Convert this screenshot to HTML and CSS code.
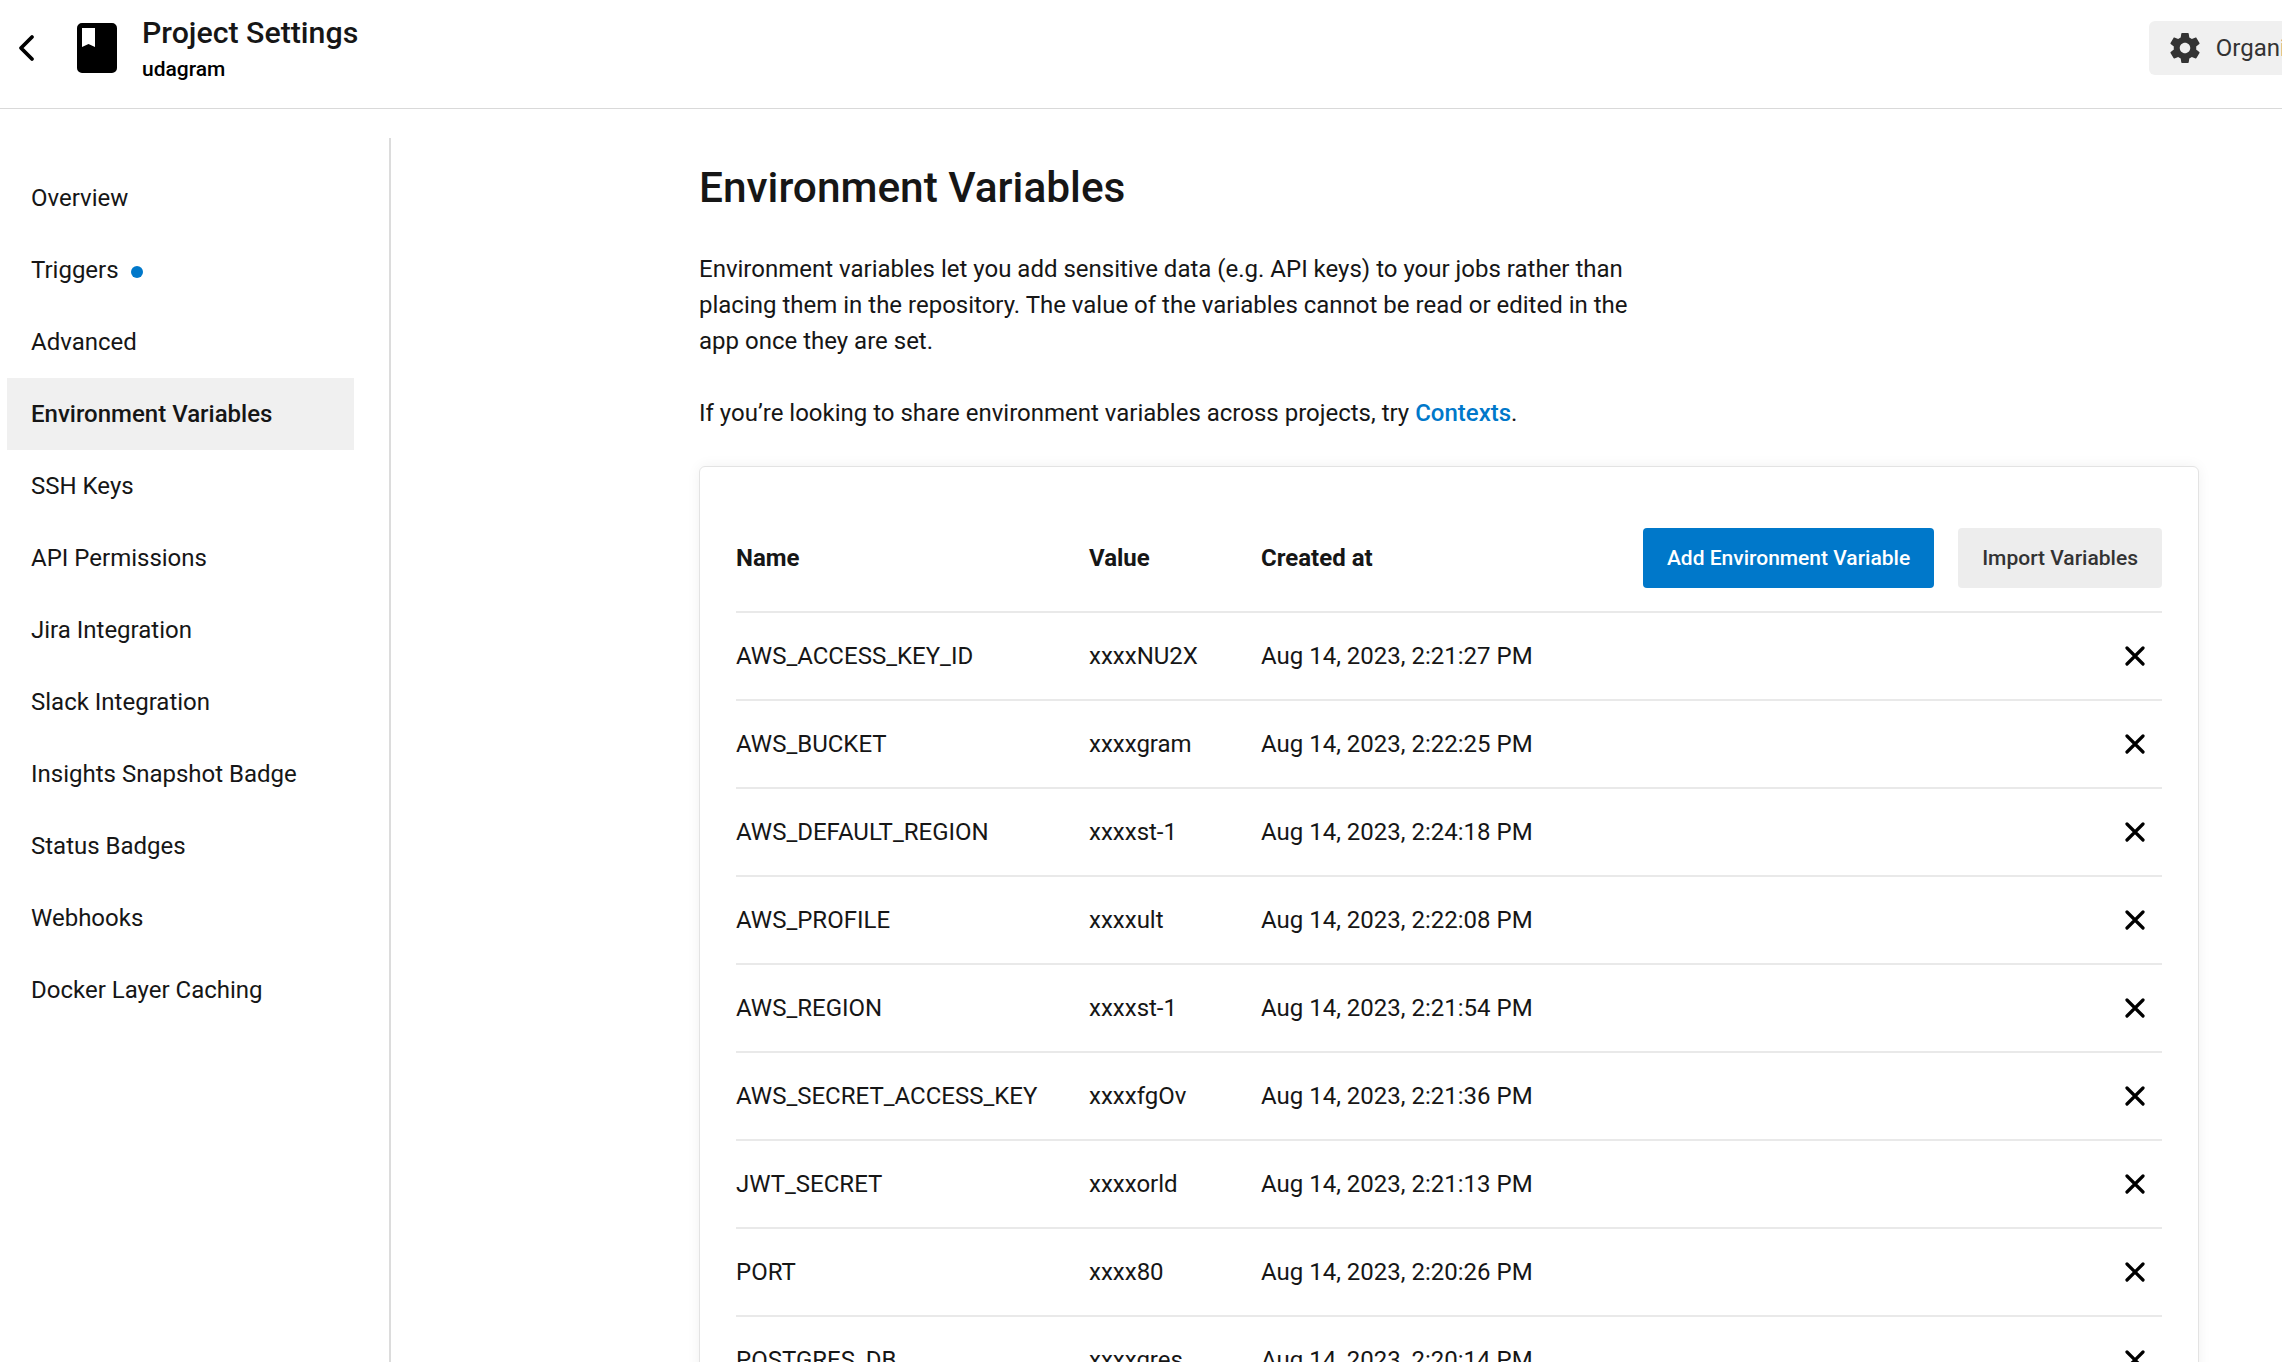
FILE: index.html
```html
<!DOCTYPE html>
<html lang="en">
<head>
    <meta charset="UTF-8">
    <title>Project Settings</title>
    <link rel="stylesheet" href="styles.css">
</head>
<body>
    <header class="topbar">
        <svg class="back-icon" viewBox="0 0 18 28"><path d="M15 3 4 14l11 11" fill="none" stroke="#000" stroke-width="3.8" stroke-linecap="round" stroke-linejoin="round"/></svg>
        <svg class="project-icon" viewBox="0 0 40 50"><path fill-rule="evenodd" d="M5 0h30a5 5 0 0 1 5 5v40a5 5 0 0 1-5 5H5a5 5 0 0 1-5-5V5a5 5 0 0 1 5-5ZM5 5v19l6.500-3 6.500 3V5Z"/></svg>
        <div class="project-title">
            <div class="title">Project Settings</div>
            <div class="subtitle">udagram</div>
        </div>
        <div class="org-button">
            <svg class="gear" viewBox="0 0 24 24"><path fill="#333" d="M19.430 12.980c.04-.32.070-.64.070-.98s-.03-.66-.07-.98l2.110-1.650c.19-.15.240-.42.120-.64l-2-3.460c-.12-.22-.39-.30-.61-.22l-2.490 1c-.52-.40-1.080-.73-1.690-.98l-.38-2.650C14.460 2.180 14.250 2 14 2h-4c-.25 0-.46.180-.49.420l-.38 2.650c-.61.250-1.170.59-1.690.98l-2.490-1c-.23-.09-.49 0-.61.220l-2 3.460c-.13.220-.07.490.12.640l2.110 1.650c-.04.320-.07.650-.07.980s.03.660.07.980l-2.110 1.650c-.19.150-.24.420-.12.640l2 3.460c.12.220.39.300.61.220l2.490-1c.52.400 1.080.730 1.690.980l.38 2.650c.03.240.24.420.49.420h4c.25 0 .46-.18.49-.42l.38-2.650c.61-.25 1.170-.59 1.690-.98l2.490 1c.23.090.49 0 .61-.22l2-3.460c.12-.22.070-.49-.12-.64l-2.110-1.650ZM12 15.500c-1.930 0-3.500-1.570-3.500-3.500s1.570-3.500 3.500-3.500 3.500 1.570 3.500 3.500-1.570 3.500-3.500 3.500Z"/></svg>
            <span>Organization Settings</span>
        </div>
    </header>

    <div class="layout">
        <nav class="sidebar">
            <a class="nav-item">Overview</a>
            <a class="nav-item">Triggers <span class="dot"></span></a>
            <a class="nav-item">Advanced</a>
            <a class="nav-item active">Environment Variables</a>
            <a class="nav-item">SSH Keys</a>
            <a class="nav-item">API Permissions</a>
            <a class="nav-item">Jira Integration</a>
            <a class="nav-item">Slack Integration</a>
            <a class="nav-item">Insights Snapshot Badge</a>
            <a class="nav-item">Status Badges</a>
            <a class="nav-item">Webhooks</a>
            <a class="nav-item">Docker Layer Caching</a>
        </nav>

        <main class="content">
            <h1>Environment Variables</h1>
            <p class="intro">Environment variables let you add sensitive data (e.g. API keys) to your jobs rather than placing them in the repository. The value of the variables cannot be read or edited in the app once they are set.</p>
            <p class="intro">If you’re looking to share environment variables across projects, try <a class="link">Contexts</a>.</p>

            <section class="card">
                <div class="row head-row">
                    <div>Name</div>
                    <div>Value</div>
                    <div>Created at</div>
                    <div class="actions">
                        <button class="btn primary">Add Environment Variable</button>
                        <button class="btn secondary">Import Variables</button>
                    </div>
                </div>
                <div class="row"><div>AWS_ACCESS_KEY_ID</div><div>xxxxNU2X</div><div>Aug 14, 2023, 2:21:27 PM</div><div class="remove"><svg viewBox="0 0 20 20"><path d="M2 2l16 16M18 2 2 18"/></svg></div></div>
                <div class="row"><div>AWS_BUCKET</div><div>xxxxgram</div><div>Aug 14, 2023, 2:22:25 PM</div><div class="remove"><svg viewBox="0 0 20 20"><path d="M2 2l16 16M18 2 2 18"/></svg></div></div>
                <div class="row"><div>AWS_DEFAULT_REGION</div><div>xxxxst-1</div><div>Aug 14, 2023, 2:24:18 PM</div><div class="remove"><svg viewBox="0 0 20 20"><path d="M2 2l16 16M18 2 2 18"/></svg></div></div>
                <div class="row"><div>AWS_PROFILE</div><div>xxxxult</div><div>Aug 14, 2023, 2:22:08 PM</div><div class="remove"><svg viewBox="0 0 20 20"><path d="M2 2l16 16M18 2 2 18"/></svg></div></div>
                <div class="row"><div>AWS_REGION</div><div>xxxxst-1</div><div>Aug 14, 2023, 2:21:54 PM</div><div class="remove"><svg viewBox="0 0 20 20"><path d="M2 2l16 16M18 2 2 18"/></svg></div></div>
                <div class="row"><div>AWS_SECRET_ACCESS_KEY</div><div>xxxxfgOv</div><div>Aug 14, 2023, 2:21:36 PM</div><div class="remove"><svg viewBox="0 0 20 20"><path d="M2 2l16 16M18 2 2 18"/></svg></div></div>
                <div class="row"><div>JWT_SECRET</div><div>xxxxorld</div><div>Aug 14, 2023, 2:21:13 PM</div><div class="remove"><svg viewBox="0 0 20 20"><path d="M2 2l16 16M18 2 2 18"/></svg></div></div>
                <div class="row"><div>PORT</div><div>xxxx80</div><div>Aug 14, 2023, 2:20:26 PM</div><div class="remove"><svg viewBox="0 0 20 20"><path d="M2 2l16 16M18 2 2 18"/></svg></div></div>
                <div class="row"><div>POSTGRES_DB</div><div>xxxxgres</div><div>Aug 14, 2023, 2:20:14 PM</div><div class="remove"><svg viewBox="0 0 20 20"><path d="M2 2l16 16M18 2 2 18"/></svg></div></div>
            </section>
        </main>
    </div>
</body>
</html>
```

FILE: styles.css
```css
html, body {
    height: 100%;
    overflow: hidden;
}
body {
    margin: 0;
    font-family: Roboto, "Liberation Sans", sans-serif;
    font-size: 24px;
    color: #161616;
    background: #fff;
}

.topbar {
    display: flex;
    align-items: center;
    height: 108px;
    border-bottom: 1px solid #d9d9d9;
    overflow: hidden;
}
.back-icon {
    width: 18px;
    height: 28px;
    margin-left: 17px;
    margin-top: -12px;
    flex-shrink: 0;
}
.project-icon {
    width: 40px;
    height: 50px;
    margin-left: 42px;
    margin-top: -12px;
    flex-shrink: 0;
}
.project-title {
    margin-left: 25px;
    margin-top: -10px;
}
.title {
    font-size: 30.3px;
    font-weight: 500;
    line-height: 37px;
}
.subtitle {
    padding-top: 2px;
    font-size: 21px;
    font-weight: 500;
    line-height: 32px;
    color: #000;
}
.org-button {
    display: flex;
    align-items: center;
    gap: 13px;
    flex-shrink: 0;
    height: 54px;
    margin-left: auto;
    margin-right: -183px;
    margin-top: -12px;
    padding-left: 18px;
    padding-right: 20px;
    background: #f0f0f0;
    border-radius: 6px;
    color: #333;
}
.gear {
    width: 36px;
    height: 36px;
}

.layout {
    display: flex;
    margin-top: 29px;
}
.sidebar {
    flex: none;
    box-sizing: border-box;
    width: 391px;
    height: 1300px;
    padding: 24px 35px 0 7px;
    border-right: 2px solid #dcdcdc;
}
.nav-item {
    display: flex;
    align-items: center;
    height: 72px;
    padding-left: 24px;
}
.nav-item.active {
    background: #f0f0f0;
    font-weight: 500;
}
.dot {
    width: 12px;
    height: 12px;
    margin-left: 12px;
    margin-top: 3px;
    border-radius: 50%;
    background: #0078ca;
}

.content {
    flex: none;
    width: 1500px;
    margin-left: 308px;
}
h1 {
    margin: 24px 0 0;
    font-size: 42.4px;
    font-weight: 500;
    line-height: 52px;
}
.intro {
    width: 950px;
    margin: 0 0 36px;
    line-height: 36px;
}
h1 + .intro {
    margin-top: 37px;
}
.link {
    color: #0078ca;
    font-weight: 500;
}

.card {
    box-sizing: border-box;
    padding: 37px 36px 0;
    border: 1px solid #e3e3e3;
    border-radius: 6px;
    box-shadow: 0 0 14px rgba(0, 0, 0, 0.06);
    margin-top: -1px;
}
.row {
    display: grid;
    grid-template-columns: 353px 172px 1fr auto;
    align-items: center;
    height: 88px;
    border-bottom: 2px solid #e9e9e9;
    box-sizing: border-box;
}
.head-row {
    height: 109px;
    font-weight: 700;
}
.actions {
    display: flex;
    gap: 24px;
}
.btn {
    height: 60px;
    padding: 0 24px;
    border: none;
    border-radius: 4px;
    font-family: inherit;
    font-size: 21px;
    font-weight: 500;
}
.primary {
    background: #0078ca;
    color: #fff;
}
.secondary {
    background: #ededed;
    color: #333;
}
.remove {
    display: flex;
    padding-right: 17px;
}
.remove svg {
    width: 20px;
    height: 20px;
}
.remove path {
    fill: none;
    stroke: #000;
    stroke-width: 3.2;
    stroke-linecap: round;
}
```
